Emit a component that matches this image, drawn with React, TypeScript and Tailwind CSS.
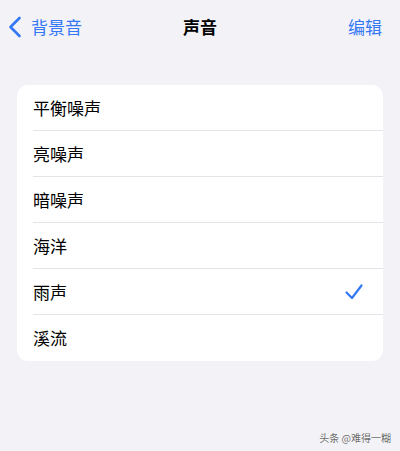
const sounds = ["平衡噪声", "亮噪声", "暗噪声", "海洋", "雨声", "溪流"];

function BackChevron() {
  return (
    <svg width="14" height="22" viewBox="0 0 14 22" fill="none" className="shrink-0">
      <path
        d="M11.5 2 L2.5 11 L11.5 20"
        stroke="currentColor"
        strokeWidth="2.6"
        strokeLinecap="round"
        strokeLinejoin="round"
      />
    </svg>
  );
}

function CheckMark() {
  return (
    <svg width="20" height="20" viewBox="0 0 20 20" fill="none">
      <path
        d="M2.5 10.5 L8 16 L17.5 3.5"
        stroke="currentColor"
        strokeWidth="2.2"
        strokeLinecap="round"
        strokeLinejoin="round"
      />
    </svg>
  );
}

export default function App() {
  return (
    <main
      className="relative w-[400px] h-[451px] bg-[#f2f2f7] overflow-hidden"
      style={{ fontFamily: '"Noto Sans CJK SC", "Liberation Sans", sans-serif' }}
    >
      <header className="relative flex items-center justify-between h-[54px] pl-[8px] pr-[18px]">
        <div className="flex items-center gap-[9px] text-[#3478f6] text-[17px]">
          <BackChevron />
          <span>背景音</span>
        </div>
        <div className="absolute left-1/2 -translate-x-1/2 text-[17px] font-semibold text-black">
          声音
        </div>
        <div className="text-[17px] text-[#3478f6]">编辑</div>
      </header>

      <section className="mx-[17px] mt-[31px] bg-white rounded-[11px] overflow-hidden">
        {sounds.map((s, i) => (
          <div key={s} className="flex items-center h-[46px] pl-[16px]">
            <div
              className={
                "flex flex-1 items-center justify-between h-full pr-[19px] " +
                (i < sounds.length - 1 ? "border-b border-[#e3e3e8]" : "")
              }
            >
              <span className="text-[17px] text-black">{s}</span>
              {s === "雨声" && (
                <span className="text-[#3478f6]">
                  <CheckMark />
                </span>
              )}
            </div>
          </div>
        ))}
      </section>

      <div
        className="absolute right-[9px] bottom-[6px] text-[10px] text-[#6b6b6b]"
        style={{ textShadow: "0 0 2px #fff, 0 0 1px #fff" }}
      >
        头条 @难得一糊
      </div>
    </main>
  );
}
